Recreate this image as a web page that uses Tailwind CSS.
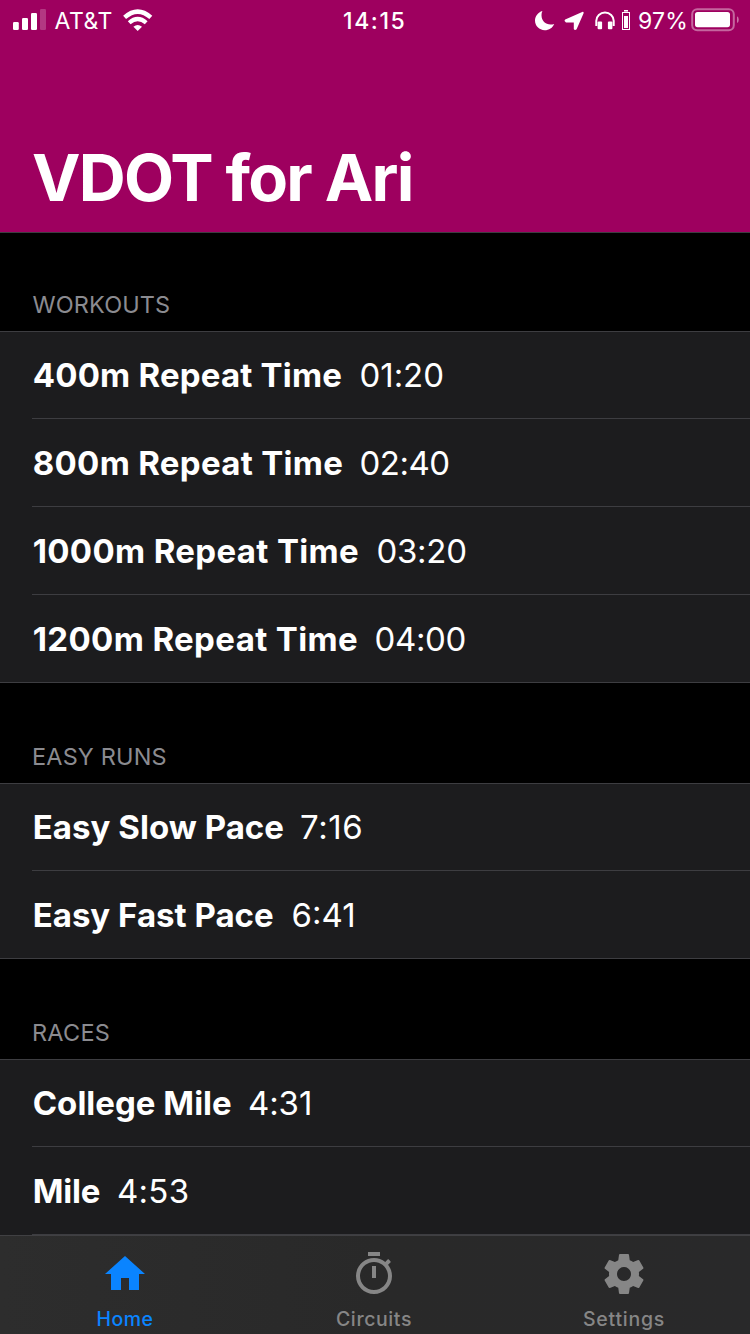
<!DOCTYPE html>
<html lang="en">
<head>
<meta charset="utf-8">
<title>VDOT for Ari</title>
<script src="https://cdn.jsdelivr.net/npm/@tailwindcss/browser@4"></script>
</head>
<body class="bg-black">
<div class="w-[750px] h-[1334px] flex flex-col overflow-hidden bg-black text-white font-[Inter,'Liberation_Sans',sans-serif]">

  <header class="h-[233px] shrink-0 flex flex-col bg-[#9e005f] border-b border-[#3d3d41]">
    <div class="h-[41px] flex items-center text-[23px] leading-[41px] whitespace-nowrap">
      <div class="w-[343px] pl-[13px] flex items-center">
        <svg class="w-[34px] h-[41px] shrink-0" viewBox="13 0 34 41" fill="#fff">
          <rect x="13" y="22" width="5.8" height="8" rx="1.3"/>
          <rect x="22" y="18" width="6" height="12" rx="1.3"/>
          <rect x="31" y="13" width="6" height="17" rx="1.3"/>
          <rect x="40" y="9" width="6" height="21" rx="1.3" opacity=".22"/>
        </svg>
        <span class="ml-[7.500px] w-[68.500px] pt-[2px] h-[43px] tracking-[0.5px]">AT&amp;T</span>
        <svg class="w-[30px] h-[41px] shrink-0" viewBox="123 0 30 41">
          <path d="M124.600 17.400Q137.700 5.800 150.800 17.400" fill="none" stroke="#fff" stroke-width="4.400"/>
          <path d="M129.200 22.700Q137.700 15.200 146.200 22.700" fill="none" stroke="#fff" stroke-width="4.200"/>
          <path d="M133.400 26.800Q137.700 23.200 142 26.800L137.700 31Z" fill="#fff"/>
        </svg>
      </div>
      <div class="w-[191px] pt-[2px] h-[43px] font-medium tracking-[1.6px]">14:15</div>
      <div class="flex items-center">
        <svg class="w-[104px] h-[41px] shrink-0" viewBox="534 0 104 41" fill="#fff">
          <path d="M542.400 11C538 12.300 535 16.300 535 20.600C535 26 539.300 30.200 544.700 30.200C549 30.200 552.700 27.700 554.200 23.900C553 24.400 551.800 24.500 550.600 24.500C545.400 24.500 541.500 20.600 541.500 15.200C541.500 13.700 541.700 12.300 542.400 11Z"/>
          <path d="M565.200 19.600L582.200 11.900Q584 11.500 583.600 13.300L576.600 29.300Q574.800 31 573.800 29V22.400H566Q563.600 21 565.200 19.600Z"/>
          <path d="M596.300 26V20.800A8.700 8.300 0 0 1 613.700 20.800V26" fill="none" stroke="#fff" stroke-width="2"/>
          <rect x="597.600" y="21.500" width="4.500" height="7.800" rx="1"/>
          <rect x="607.900" y="21.500" width="4.500" height="7.800" rx="1"/>
          <rect x="622.500" y="12.500" width="7" height="17" fill="none" stroke="#fff"/>
          <rect x="624" y="10" width="4" height="1.600"/>
          <rect x="624" y="16" width="4" height="12"/>
        </svg>
        <span class="w-[53px] pt-[2px] h-[43px] tracking-[0.2px]">97%</span>
        <svg class="w-[50px] h-[41px] shrink-0" viewBox="691 0 50 41" fill="#fff">
          <rect x="692.200" y="9.200" width="41.600" height="21" rx="5" fill="none" stroke="#fff" stroke-opacity=".4" stroke-width="2"/>
          <rect x="695" y="12" width="35" height="15.200" rx="2.600"/>
          <path d="M737 16.300Q738.800 17.300 738.800 19.700T737 23.100Z" opacity=".45"/>
        </svg>
      </div>
    </div>
    <h1 class="mt-auto mb-[14px] pl-[32px] text-[65px] leading-[80px] font-[650] tracking-[-1.75px] whitespace-nowrap">VDOT for Ari</h1>
  </header>

  <main class="h-[1002px] shrink-0 overflow-hidden text-[33px] leading-[87px] whitespace-nowrap">
    <h2 class="h-[98px] pl-[32.500px] pb-[14px] flex items-end text-[23.500px] leading-[24px] text-[#8b8b90] tracking-[0.100px]">WORKOUTS</h2>
    <section class="border-y border-[#3d3d41] bg-[#1c1c1e] pl-8">
      <div class="flex h-[86px]"><b class="w-[327.500px] pl-[0.700px] font-bold tracking-[0.200px]">400m Repeat Time</b><span class="tracking-[-0.050px]">01:20</span></div>
      <div class="flex h-[88px] leading-[89px] border-t border-[#3d3d41]"><b class="w-[327.500px] pl-[0.700px] font-bold tracking-[0.320px]">800m Repeat Time</b><span class="tracking-[-0.500px]">02:40</span></div>
      <div class="flex h-[88px] leading-[89px] border-t border-[#3d3d41]"><b class="w-[344.500px] pl-[0.700px] font-bold tracking-[0.350px]">1000m Repeat Time</b><span class="tracking-[-0.300px]">03:20</span></div>
      <div class="flex h-[88px] leading-[89px] border-t border-[#3d3d41]"><b class="w-[342.500px] pl-[0.700px] font-bold tracking-[0.380px]">1200m Repeat Time</b><span class="tracking-[-0.350px]">04:00</span></div>
    </section>
    <h2 class="h-[100px] pl-[32px] pb-[14px] flex items-end text-[23.500px] leading-[24px] text-[#8b8b90] tracking-[0.150px]">EASY RUNS</h2>
    <section class="border-y border-[#3d3d41] bg-[#1c1c1e] pl-8">
      <div class="flex h-[86px]"><b class="w-[268px] pl-[0.700px] font-bold tracking-[0.040px]">Easy Slow Pace</b><span class="tracking-[0.600px]">7:16</span></div>
      <div class="flex h-[88px] leading-[89px] border-t border-[#3d3d41]"><b class="w-[259.500px] pl-[0.700px] font-bold tracking-[0px]">Easy Fast Pace</b><span class="tracking-[0px]">6:41</span></div>
    </section>
    <h2 class="h-[100px] pl-[32px] pb-[14px] flex items-end text-[23.500px] leading-[24px] text-[#8b8b90] tracking-[0.250px]">RACES</h2>
    <section class="border-t border-[#3d3d41] bg-[#1c1c1e] pl-8">
      <div class="flex h-[86px]"><b class="w-[216px] pl-[0.700px] font-bold tracking-[0.020px]">College Mile</b><span class="tracking-[-0.100px]">4:31</span></div>
      <div class="flex h-[88px] leading-[89px] border-t border-[#3d3d41]"><b class="w-[85px] pl-[0.700px] font-bold tracking-[-0.200px]">Mile</b><span class="tracking-[0.250px]">4:53</span></div>
      <div class="h-[1px] bg-[#3d3d41]"></div>
    </section>
  </main>

  <nav class="h-[99px] shrink-0 border-t border-[#404043] bg-linear-to-r from-[#2d2d2d] via-[#292929] to-[#29292a] flex text-[19.500px] leading-[24px] text-[#868686]">
    <a class="w-[250px] pt-[14px] flex flex-col items-center text-[#0a84ff]">
      <svg class="w-12 h-12 mb-[9px]" viewBox="0 0 24 24" fill="currentColor"><path d="M10 20v-6h4v6h5v-8h3L12 3 2 12h3v8z"/></svg>
      <span class="tracking-[0.500px] font-[450]">Home</span>
    </a>
    <a class="w-[248px] pt-[14px] flex flex-col items-center">
      <svg class="w-12 h-12 mb-[9px]" viewBox="0 0 24 24" fill="currentColor"><path d="M15 1H9v2h6V1zm-4 13h2V8h-2v6zm8.030-6.610l1.420-1.420c-.43-.51-.9-.99-1.410-1.410l-1.420 1.420C16.070 4.740 14.120 4 12 4c-4.970 0-9 4.030-9 9s4.020 9 9 9 9-4.030 9-9c0-2.120-.74-4.070-1.970-5.610zM12 20c-3.870 0-7-3.130-7-7s3.130-7 7-7 7 3.130 7 7-3.130 7-7 7z"/></svg>
      <span class="tracking-[0.600px] font-[450]">Circuits</span>
    </a>
    <a class="w-[252px] pt-[14px] flex flex-col items-center">
      <svg class="w-12 h-12 mb-[9px]" viewBox="0 0 24 24" fill="currentColor"><path d="M19.430 12.980c.04-.32.070-.64.070-.98s-.03-.66-.07-.98l2.110-1.650c.19-.15.24-.42.120-.64l-2-3.460c-.12-.22-.39-.3-.61-.22l-2.490 1c-.52-.4-1.080-.73-1.690-.98l-.38-2.650C14.460 2.180 14.250 2 14 2h-4c-.25 0-.46.18-.49.42l-.38 2.650c-.61.25-1.170.59-1.690.98l-2.490-1c-.23-.09-.49 0-.61.22l-2 3.460c-.13.22-.07.49.12.64l2.110 1.650c-.04.32-.07.65-.07.98s.03.66.07.98l-2.110 1.650c-.19.15-.24.42-.12.64l2 3.460c.12.22.39.3.61.22l2.490-1c.52.4 1.080.73 1.690.98l.38 2.650c.03.24.24.42.49.42h4c.25 0 .46-.18.49-.42l.38-2.650c.61-.25 1.170-.59 1.690-.98l2.490 1c.23.09.49 0 .61-.22l2-3.460c.12-.22.07-.49-.12-.64l-2.110-1.650zM12 15.500c-1.930 0-3.500-1.570-3.500-3.500s1.570-3.500 3.500-3.500 3.500 1.570 3.500 3.500-1.570 3.500-3.500 3.500z"/></svg>
      <span class="tracking-[0.750px] font-[450]">Settings</span>
    </a>
  </nav>
</div>
</body>
</html>
